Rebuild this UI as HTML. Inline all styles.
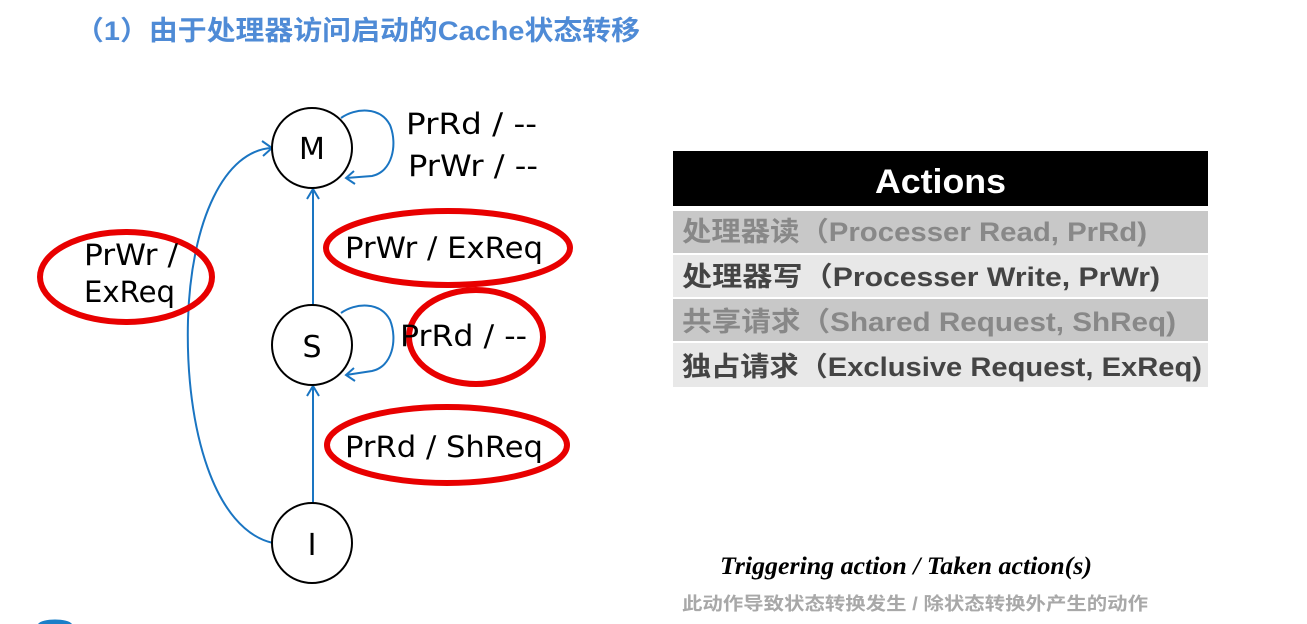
<!DOCTYPE html>
<html><head><meta charset="utf-8"><style>
html,body{margin:0;padding:0;background:#fff;width:1307px;height:624px;overflow:hidden;position:relative}
</style></head><body>
<svg width="1307" height="624" style="position:absolute;left:0;top:0" xmlns="http://www.w3.org/2000/svg">
<text x="75" y="40" textLength="565" lengthAdjust="spacingAndGlyphs" font-family="Liberation Sans, Noto Sans CJK SC, sans-serif" font-weight="bold" font-size="27" fill="#4f8bd6">（1）由于处理器访问启动的Cache状态转移</text>
<g fill="none" stroke="#1a75c2" stroke-width="2">
<path d="M341 118 C355 108 380 106 390 125 C398 145 392 172 372 176 L346 178"/>
<path d="M354 171 L346 178 L355 184"/>
<path d="M341 313 C355 303 380 301 390 320 C398 340 392 367 372 371 L346 375"/>
<path d="M354 368 L346 375 L355 381"/>
<line x1="313" y1="305" x2="313" y2="189"/>
<path d="M307 199 L313 189 L319 199"/>
<line x1="313" y1="503" x2="313" y2="386"/>
<path d="M307 396 L313 386 L319 396"/>
<path d="M273 543 C215 530 185 430 188 320 C191 220 225 150 272 148"/>
<path d="M262 141 L272 148 L263 156"/>
</g>
<g fill="#fff" stroke="#000" stroke-width="2">
<ellipse cx="312" cy="148" rx="40" ry="40"/>
<ellipse cx="312" cy="345" rx="40" ry="40"/>
<ellipse cx="312" cy="543" rx="40" ry="40"/>
</g>
<g font-family="DejaVu Sans, sans-serif" font-size="30" text-anchor="middle" fill="#000">
<text x="312" y="159">M</text><text x="312" y="357">S</text><text x="312" y="555">I</text>
</g>
<g fill="none" stroke="#e80000" stroke-width="6">
<ellipse cx="448" cy="248" rx="122" ry="37"/>
<ellipse cx="126" cy="277" rx="86" ry="45"/>
<ellipse cx="476" cy="337" rx="67" ry="47"/>
<ellipse cx="447" cy="445" rx="120" ry="38"/>
</g>
<g font-family="DejaVu Sans, sans-serif" font-size="29" fill="#000">
<text x="406" y="134" textLength="131" lengthAdjust="spacingAndGlyphs">PrRd / --</text>
<text x="408" y="176" textLength="130" lengthAdjust="spacingAndGlyphs">PrWr / --</text>
<text x="345" y="258" textLength="198" lengthAdjust="spacingAndGlyphs">PrWr / ExReq</text>
<text x="84" y="265" textLength="94" lengthAdjust="spacingAndGlyphs">PrWr /</text>
<text x="84" y="302" textLength="91" lengthAdjust="spacingAndGlyphs">ExReq</text>
<text x="400" y="346" textLength="127" lengthAdjust="spacingAndGlyphs">PrRd / --</text>
<text x="345" y="457" textLength="198" lengthAdjust="spacingAndGlyphs">PrRd / ShReq</text>
</g>
<path d="M38 624 C42 618 68 618 72 624 Z" fill="#1a7fc8"/>
<rect x="673" y="151" width="535" height="55" fill="#000"/>
<rect x="673" y="211" width="535" height="42" fill="#c8c8c8"/>
<rect x="673" y="255" width="535" height="42" fill="#e8e8e8"/>
<rect x="673" y="299" width="535" height="42" fill="#c8c8c8"/>
<rect x="673" y="343" width="535" height="44" fill="#e8e8e8"/>
<text x="875" y="193" textLength="131" lengthAdjust="spacingAndGlyphs" font-family="Liberation Sans, sans-serif" font-weight="bold" font-size="34" fill="#fff">Actions</text>
<g font-family="Liberation Sans, Noto Sans CJK SC, sans-serif" font-weight="bold" font-size="27">
<text x="682" y="241" textLength="465" lengthAdjust="spacingAndGlyphs" fill="#888">处理器读（Processer Read, PrRd)</text>
<text x="682" y="286" textLength="478" lengthAdjust="spacingAndGlyphs" fill="#444">处理器写（Processer Write, PrWr)</text>
<text x="682" y="331" textLength="494" lengthAdjust="spacingAndGlyphs" fill="#888">共享请求（Shared Request, ShReq)</text>
<text x="682" y="376" textLength="520" lengthAdjust="spacingAndGlyphs" fill="#444">独占请求（Exclusive Request, ExReq)</text>
</g>
<text x="720" y="574" textLength="372" lengthAdjust="spacingAndGlyphs" font-family="Liberation Serif, serif" font-style="italic" font-weight="bold" font-size="25" fill="#000">Triggering action / Taken action(s)</text>
<text x="682" y="610" textLength="466" lengthAdjust="spacingAndGlyphs" font-family="Liberation Sans, Noto Sans CJK SC, sans-serif" font-weight="bold" font-size="18" fill="#a8a8a8">此动作导致状态转换发生 / 除状态转换外产生的动作</text>
</svg>
</body></html>
